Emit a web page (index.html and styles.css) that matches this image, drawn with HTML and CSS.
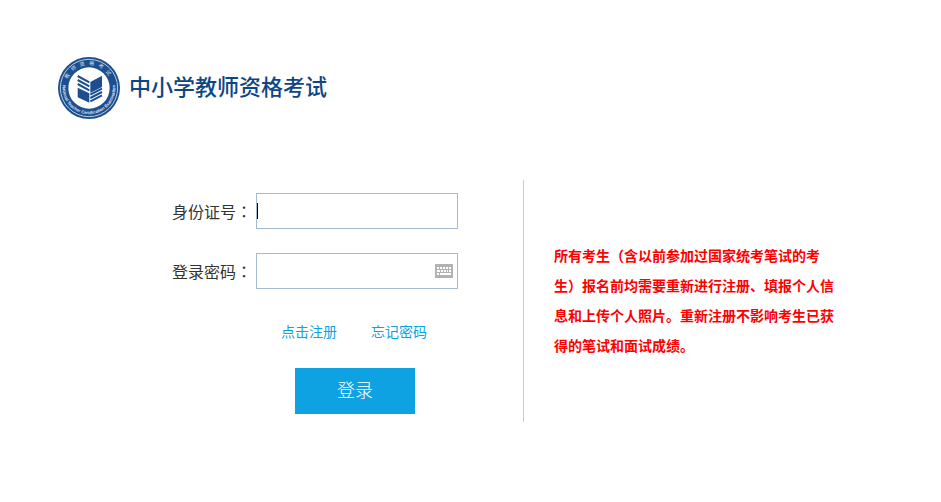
FILE: index.html
```html
<!DOCTYPE html>
<html lang="zh-CN">
<head>
  <meta charset="UTF-8">
  <title>中小学教师资格考试</title>
  <link rel="stylesheet" href="styles.css">
</head>
<body>
<div class="header">
  <svg class="logo" viewBox="0 0 186 186" aria-hidden="true">
    <defs>
      <path id="arcTop" d="M24 93a69 69 0 0 1 138 0"/>
      <path id="arcBottom" d="M15 80a79 79 0 1 0 156 0"/>
    </defs>
    <circle cx="93" cy="93" r="93" fill="#1d4f90"/>
    <circle cx="93" cy="93" r="86" fill="none" stroke="#b9cbe0" stroke-width="3"/>
    <circle cx="93" cy="93" r="62" fill="#fff"/>
    <text class="logo-cn"><textPath href="#arcTop" startOffset="50%" text-anchor="middle">教师资格考试</textPath></text>
    <text class="logo-en"><textPath href="#arcBottom" startOffset="50%" text-anchor="middle">National Teacher Certification Examination</textPath></text>
    <g fill="#1d4f90">
      <path d="M59 92l35 17v28l-35-16z"/>
      <path d="M97 75l35-19v34l-35 18z"/>
    </g>
    <g fill="none" stroke="#1d4f90" stroke-width="6">
      <path d="M59 57l35 19M59 69l35 19M59 81l35 19"/>
      <path d="M97 113l35-18M97 123l35-18M97 133l35-18"/>
    </g>
  </svg>
  <h1>中小学教师资格考试</h1>
</div>

<div class="main">
  <form class="login" onsubmit="return false">
    <div class="row">
      <label for="idcard">身份证号<span class="colon" lang="zh-TW">：</span></label>
      <div class="field">
        <input type="text" id="idcard">
        <span class="caret"></span>
      </div>
    </div>
    <div class="row">
      <label for="password">登录密码<span class="colon" lang="zh-TW">：</span></label>
      <div class="field">
        <input type="password" id="password">
        <button type="button" class="keyboard" aria-label="软键盘">
          <svg width="18" height="14" viewBox="0 0 18 14" shape-rendering="crispEdges">
            <path d="M0 0h18v14H0z" fill="#b2b2b2"/>
            <path d="M2 3h2v2H2zM5 3h2v2H5zM8 3h2v2H8zM11 3h2v2h-2zM14 3h2v2h-2zM2 6h3v2H2zM6 6h2v2H6zM9 6h2v2H9zM12 6h1v2h-1zM14 6h2v2h-2zM2 9h2v2H2zM5 9h11v2H5z" fill="#fff"/>
          </svg>
        </button>
      </div>
    </div>
    <div class="links">
      <a href="#">点击注册</a>
      <a href="#">忘记密码</a>
    </div>
    <button type="submit" class="btn">登录</button>
  </form>

  <div class="notice">
    <p>所有考生（含以前参加过国家统考笔试的考生）报名前均需要重新进行注册、填报个人信息和上传个人照片。重新注册不影响考生已获得的笔试和面试成绩。</p>
  </div>
</div>
</body>
</html>
```

FILE: styles.css
```css
body {
  margin: 0;
  padding: 57px 58px;
  background: #fff;
  color: #333;
  font-family: "Noto Sans CJK SC", sans-serif;
}
.header { display: flex; align-items: center; gap: 9px; }
.header h1 { margin: 0; padding-bottom: 6px; font-size: 22px; font-weight: 500; line-height: 32px; color: #0d4684; }
.logo { width: 62px; height: 62px; }
.logo-cn { font-size: 15px; letter-spacing: 12px; fill: #dfe8f2; }
.logo-en { font-family: "Liberation Sans", sans-serif; font-size: 13px; font-weight: bold; fill: #dfe8f2; }
.main {
  display: flex;
  margin-top: 61px;
}
.login {
  box-sizing: border-box;
  width: 466px;
  padding: 13px 65px 8px 114px;
  border-right: 1px solid #ccc;
}
.row {
  display: flex;
  align-items: center;
  gap: 4px;
  margin-bottom: 24px;
}
.row label { font-size: 16px; line-height: 24px; white-space: nowrap; }
/* centered full-width colon */
.colon { font-family: "Noto Sans CJK TC", sans-serif; }
.field { position: relative; flex: 1; }
.field input {
  display: block;
  box-sizing: border-box;
  width: 100%;
  height: 36px;
  padding: 0;
  border: 1px solid #a5b9cf;
  font-size: 16px;
  outline: none;
}
.caret {
  position: absolute;
  top: 10px;
  left: 1px;
  width: 1px;
  height: 16px;
  background: #000;
}
.keyboard {
  position: absolute;
  top: 11px;
  right: 5px;
  padding: 0;
  border: 0;
  background: none;
  cursor: pointer;
}
.keyboard svg { display: block; }
.links {
  display: flex;
  gap: 34px;
  padding-left: 109px;
  margin-top: 31px;
  font-size: 14px;
  line-height: 22px;
}
.links a { color: #0fa2e3; text-decoration: none; }
.btn {
  display: block;
  width: 120px;
  height: 46px;
  margin: 26px 0 0 123px;
  padding: 0 0 4px;
  border: 0;
  background: #0fa2e3;
  color: #fff;
  font-family: inherit;
  font-size: 18px;
  font-weight: 300;
  cursor: pointer;
}
.notice {
  display: flex;
  align-items: center;
  width: 280px;
  margin-left: 30px;
}
.notice p {
  margin: 0;
  padding-bottom: 2px;
  color: #f00;
  font-size: 14px;
  font-weight: bold;
  line-height: 30px;
}
```
